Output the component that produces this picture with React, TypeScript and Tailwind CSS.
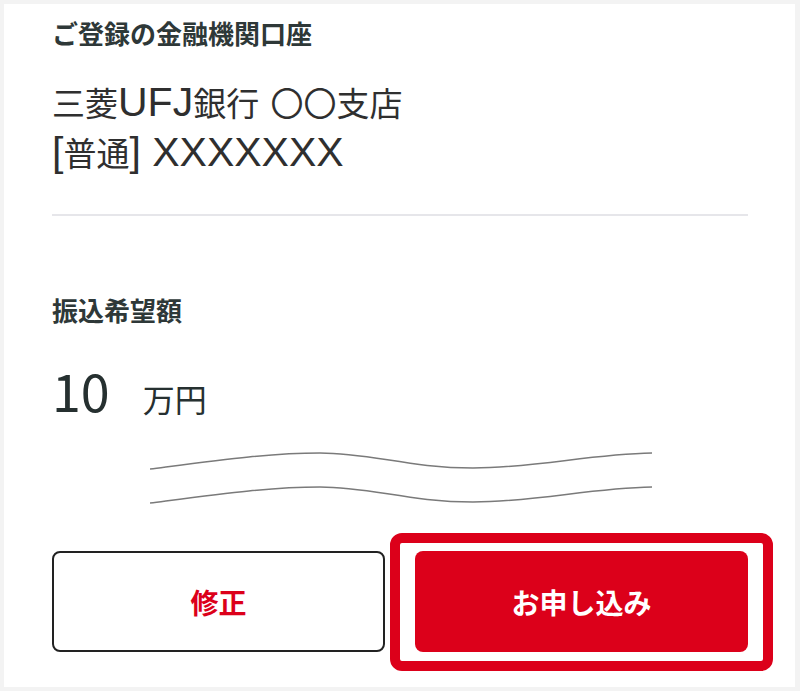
import React from "react"

const font = { fontFamily: '"Noto Sans CJK JP", "Noto Sans", sans-serif' }
const bodyFont = { fontFamily: '"Liberation Sans", "Noto Sans CJK JP", sans-serif' }

function Wave({ y }: { y: number }) {
  return (
    <path
      d={`M0 ${y + 17} C 70 ${y + 8}, 120 ${y + 1}, 170 ${y + 1} S 260 ${y + 16}, 323 ${y + 16} S 440 ${y + 2}, 502 ${y + 1}`}
      fill="none"
      stroke="#7a7a7a"
      strokeWidth="1.5"
    />
  )
}

export default function App() {
  return (
    <div className="w-[800px] h-[691px] bg-[#f3f3f3] p-[4px] pr-[5px]" style={font}>
      <div className="h-[683px] bg-white pl-[48px] pr-[47px] pt-[16px]">
        {/* ご登録の金融機関口座 */}
        <div className="text-[26px] leading-[26px] font-bold text-[#2e3838]">
          ご登録の金融機関口座
        </div>
        <div className="mt-[34px] text-[33px] leading-[50px] text-[#2f2f2f]" style={bodyFont}>
          <div className="h-[50px] overflow-visible">
            三菱<span className="text-[41px] leading-none">UFJ</span>銀行
            <span className="text-[41px] leading-none"> </span>〇〇支店
          </div>
          <div className="h-[50px] overflow-visible">
            <span className="text-[41px] leading-none">[</span>普通
            <span className="text-[41px] leading-none">] XXXXXXX</span>
          </div>
        </div>
        <div className="mt-[34px] h-[2px] bg-[#e6e6ea]" />

        {/* 振込希望額 */}
        <div className="mt-[81px] text-[26px] leading-[26px] font-bold text-[#2e3838]">
          振込希望額
        </div>
        <div className="mt-[41px] flex items-baseline text-[#263030]">
          <span className="text-[52px] leading-[52px]">10</span>
          <span className="ml-[33px] text-[32px] leading-[32px]">万円</span>
        </div>

        {/* 省略 */}
        <svg width="504" height="60" viewBox="0 0 504 60" className="mt-[33px] ml-[98px] block">
          <Wave y={3} />
          <Wave y={37} />
        </svg>

        {/* ボタン */}
        <div className="mt-[42px] grid grid-cols-2 gap-[30px]">
          <button className="h-[101px] rounded-[8px] border-2 border-[#222] bg-white text-[28px] font-bold text-[#dc001a]">
            修正
          </button>
          <div className="relative">
            <div className="absolute -left-[25px] -right-[25px] -top-[18px] -bottom-[19px] rounded-[12px] border-[10px] border-[#dc001a]" />
            <button className="relative w-full h-[101px] rounded-[8px] bg-[#dc001a] text-[28px] font-bold text-white">
              お申し込み
            </button>
          </div>
        </div>
      </div>
    </div>
  )
}
